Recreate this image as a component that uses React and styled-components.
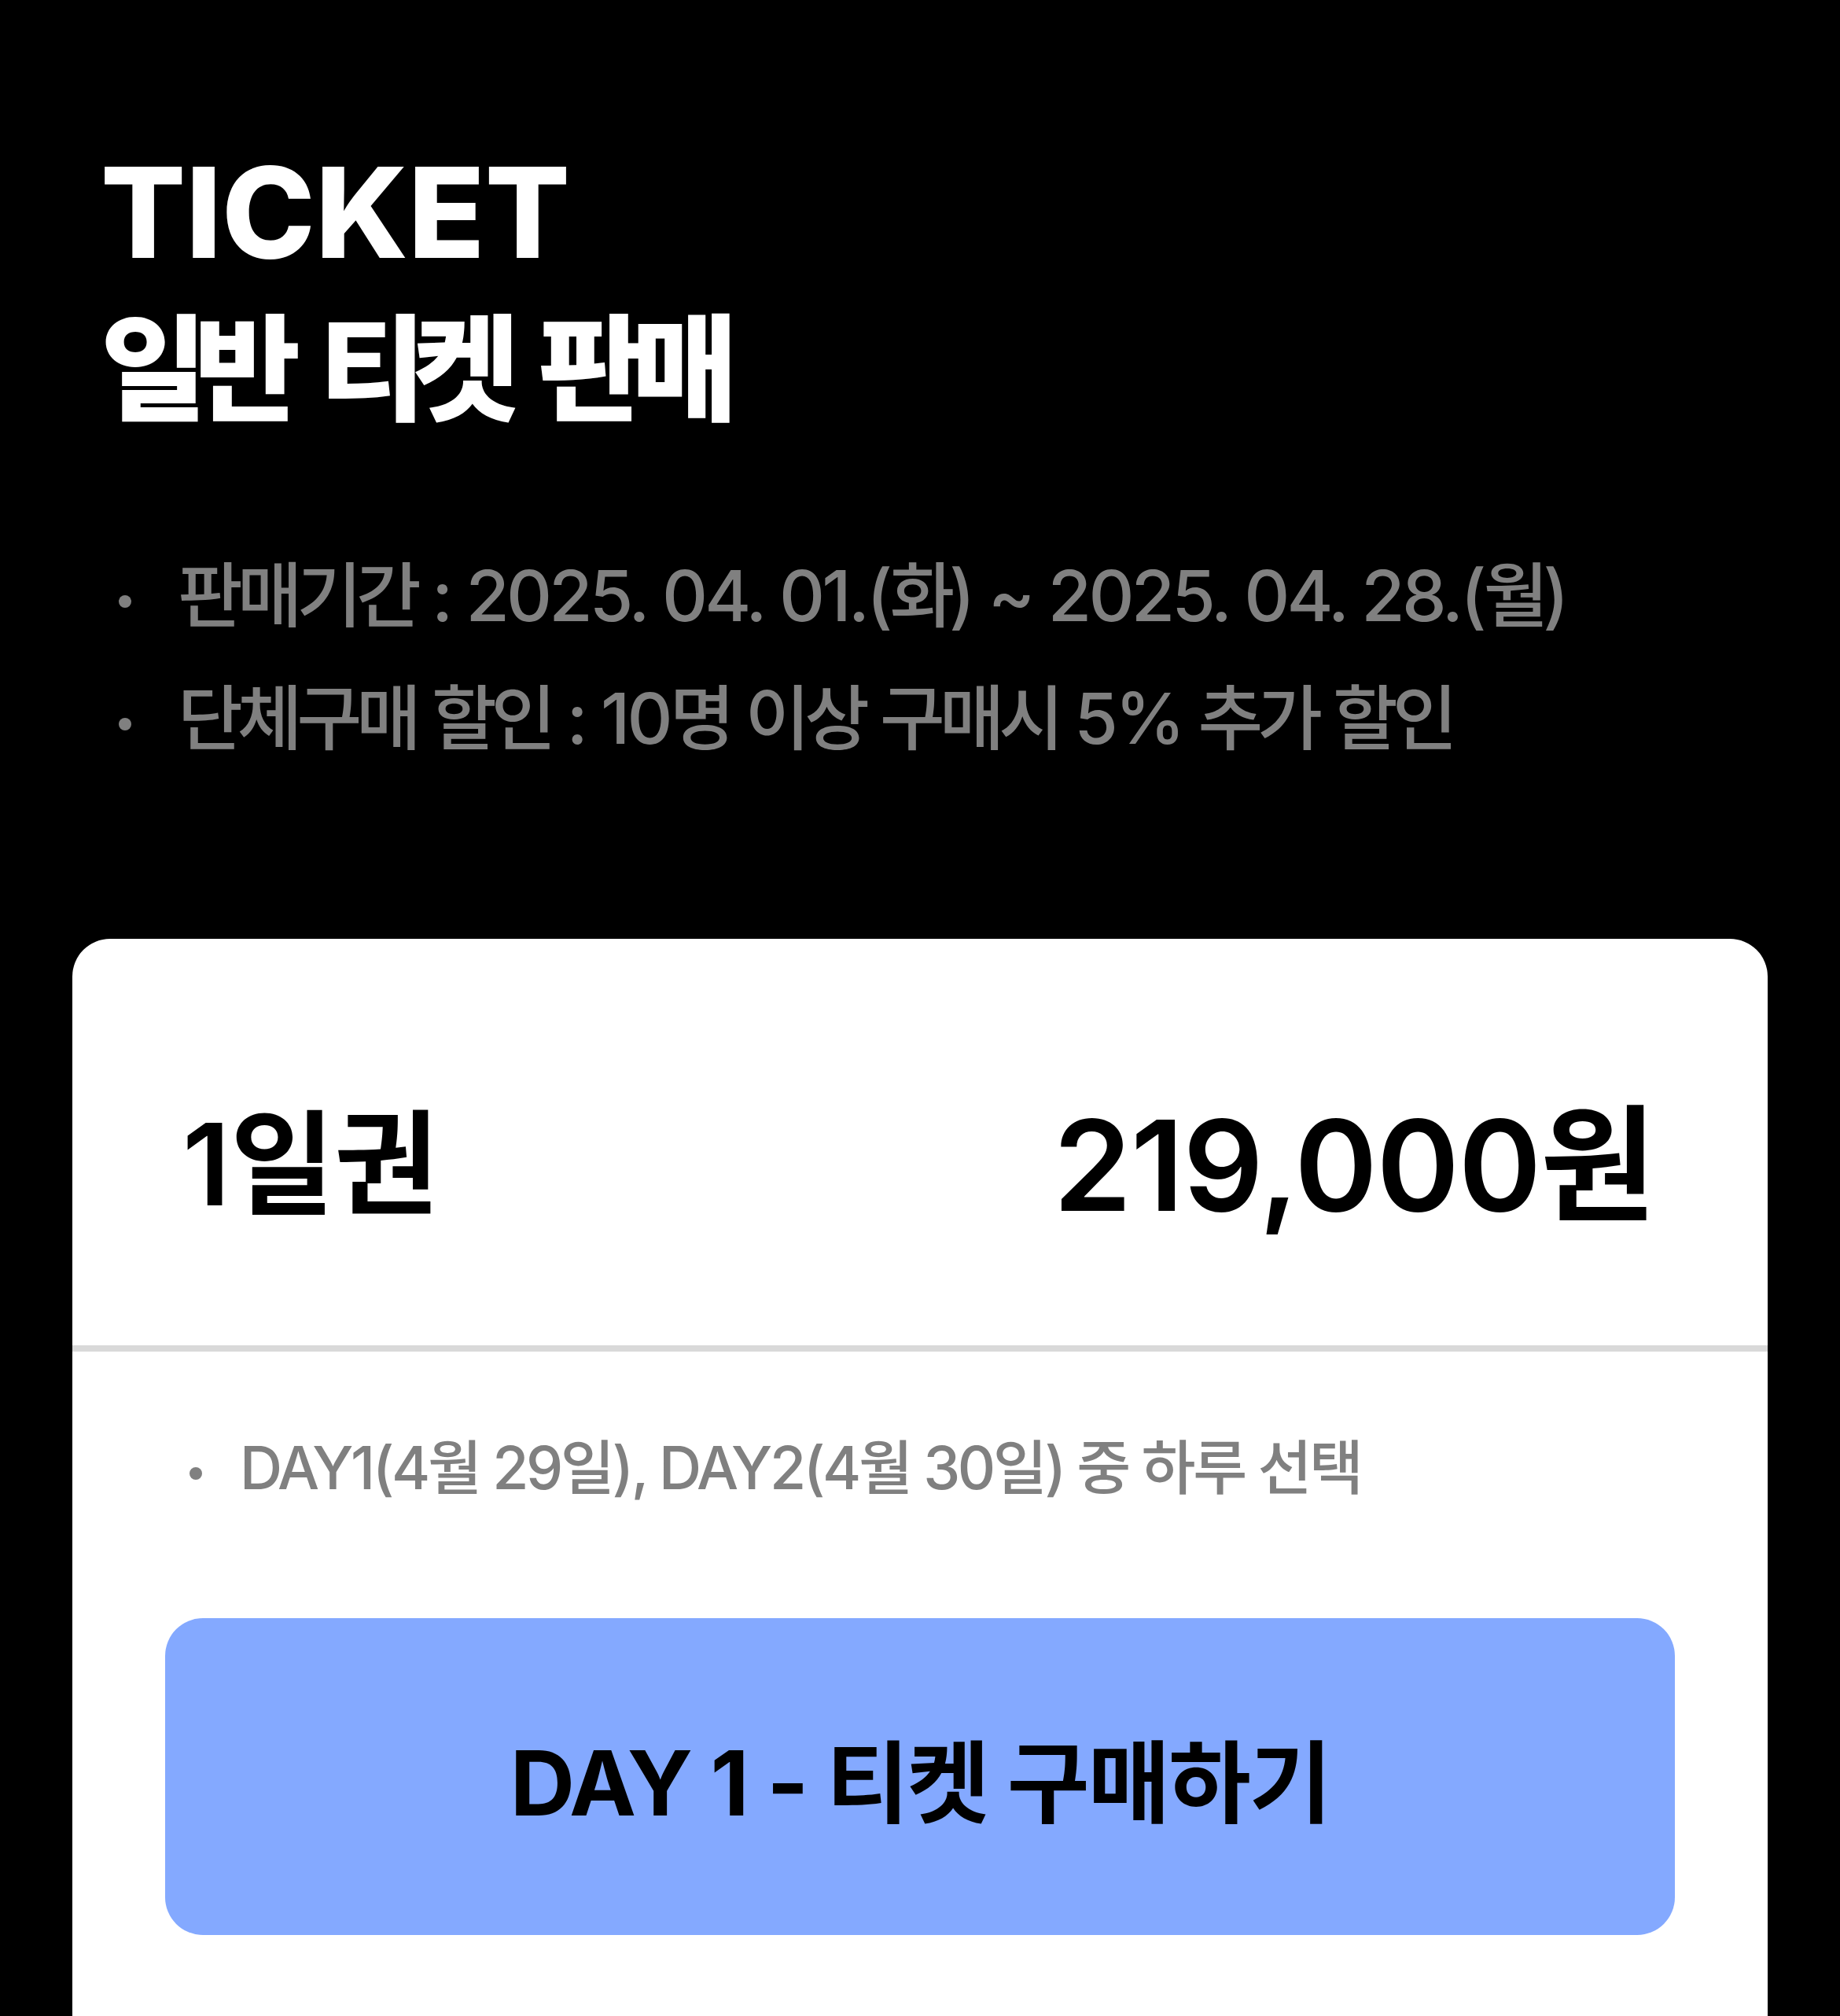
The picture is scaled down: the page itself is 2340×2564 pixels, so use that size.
import React from "react";
import styled, { createGlobalStyle } from "styled-components";

const GlobalStyle = createGlobalStyle`
  html, body {
    margin: 0;
    padding: 0;
    background: #000000;
  }
  body {
    font-family: Inter, "Noto Sans CJK KR", sans-serif;
    overflow: hidden;
  }
`;

const Page = styled.main`
  min-height: 2564px;
  padding: 0 92px;
  box-sizing: border-box;
`;

const Intro = styled.section`
  padding: 170px 0 0 36px;
`;

const Title = styled.h1`
  margin: 0;
  color: #ffffff;
  font-weight: 800;
`;

const TitleLine = styled.span`
  display: block;
  font-size: ${(p) => (p.$ko ? "147px" : "160px")};
  line-height: 200px;
  letter-spacing: ${(p) => (p.$ko ? "-0.11em" : "0")};
  word-spacing: ${(p) => (p.$ko ? "24px" : "0")};
`;

const InfoList = styled.ul`
  margin: 110px 0 0;
  padding: 0;
  list-style: none;
`;

const InfoItem = styled.li`
  display: flex;
  color: #808080;
  font-size: 90px;
  line-height: 156px;
  font-weight: 500;
  letter-spacing: -0.043em;

  &::before {
    content: "";
    flex: none;
    width: 16px;
    height: 16px;
    margin: 77px 59px 0 23px;
    border-radius: 50%;
    background: currentColor;
  }
`;

// Hangul runs sit tighter than the Latin figures around them
const Ko = styled.span`
  letter-spacing: -0.079em;
  word-spacing: 0.036em;
`;

const Card = styled.section`
  margin-top: 202px;
  background: #ffffff;
  border-radius: 48px;
`;

const CardHead = styled.header`
  height: 525px;
  box-sizing: border-box;
  padding: 58px 143px 0 140px;
  border-bottom: 8px solid #d9d9d9;
  display: flex;
  align-items: center;
  justify-content: space-between;
`;

const PassName = styled.h2`
  margin: 0;
  font-size: 144px;
  line-height: 1.2;
  font-weight: 600;
  letter-spacing: 0;
  color: #000000;
`;

const Price = styled.strong`
  font-size: 160px;
  line-height: 1.2;
  font-weight: 600;
  letter-spacing: -0.008em;
  color: #000000;
`;

const CardBody = styled.div`
  padding: 92px 118px 160px;
`;

const NoteList = styled.ul`
  margin: 0;
  padding: 0;
  list-style: none;
`;

const NoteItem = styled.li`
  display: flex;
  color: #808080;
  font-size: 75px;
  line-height: 112px;
  font-weight: 500;
  letter-spacing: -0.045em;

  &::before {
    content: "";
    flex: none;
    width: 16px;
    height: 16px;
    margin: 55px 48px 0 31px;
    border-radius: 50%;
    background: currentColor;
  }
`;

const BuyButton = styled.button`
  margin-top: 135px;
  width: 100%;
  height: 403px;
  border: none;
  border-radius: 48px;
  background: #84a9ff;
  color: #000000;
  font-family: inherit;
  font-size: 114px;
  font-weight: 700;
  letter-spacing: -0.02em;
  display: flex;
  align-items: center;
  justify-content: center;
  cursor: pointer;
`;

const App = () => {
  return (
    <>
      <GlobalStyle />
      <Page>
        <Intro>
          <Title>
            <TitleLine>TICKET</TitleLine>
            <TitleLine $ko>일반 티켓 판매</TitleLine>
          </Title>
          <InfoList>
            <InfoItem>
              <span>
                <Ko>판매기간</Ko> : 2025. 04. 01.(<Ko>화</Ko>) ~ 2025. 04. 28.(<Ko>월</Ko>)
              </span>
            </InfoItem>
            <InfoItem>
              <span>
                <Ko>단체구매 할인</Ko> : 10<Ko>명 이상 구매시</Ko> 5% <Ko>추가 할인</Ko>
              </span>
            </InfoItem>
          </InfoList>
        </Intro>

        <Card>
          <CardHead>
            <PassName>1일권</PassName>
            <Price>219,000원</Price>
          </CardHead>
          <CardBody>
            <NoteList>
              <NoteItem>DAY1(4월 29일), DAY2(4월 30일) 중 하루 선택</NoteItem>
            </NoteList>
            <BuyButton>DAY 1 - 티켓 구매하기</BuyButton>
          </CardBody>
        </Card>
      </Page>
    </>
  );
};

export default App;
